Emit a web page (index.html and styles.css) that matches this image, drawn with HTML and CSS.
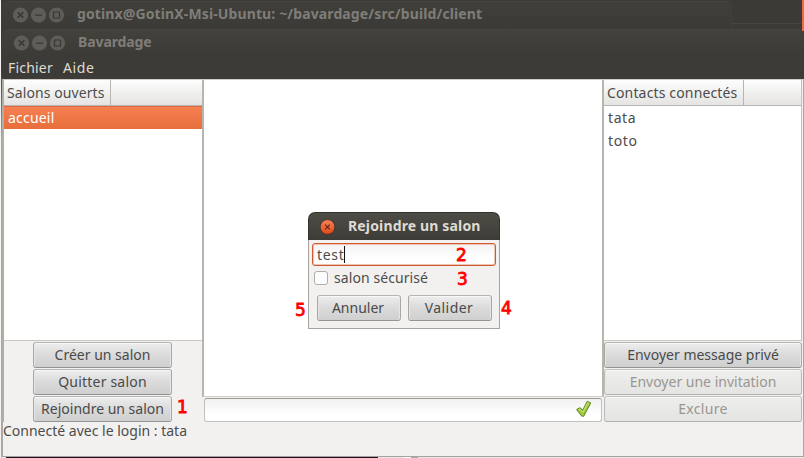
FILE: index.html
```
<!DOCTYPE html>
<html lang="fr">
<head>
<meta charset="utf-8">
<title>Bavardage</title>
<link rel="stylesheet" href="styles.css">
</head>
<body>
<svg class="defs" width="0" height="0">
  <symbol id="controls" viewBox="0 0 52 16">
    <g fill="#5f5d57"><circle cx="7.5" cy="8" r="7.6"/><circle cx="25.5" cy="8" r="7.6"/><circle cx="43.5" cy="8" r="7.6"/></g>
    <g fill="none" stroke="#383732" stroke-width="1.2">
      <path d="M4.7 5.2l5.6 5.6M10.3 5.2l-5.6 5.6" stroke-width="1.6"/>
      <path d="M22 8.2h7"/><path d="M40.5 5h6v6h-6z"/>
    </g>
  </symbol>
</svg>
<div class="terminal">
  <div class="terminal-bar">
    <svg class="controls" width="52" height="16"><use href="#controls"/></svg>
    <span class="terminal-title">gotinx@GotinX-Msi-Ubuntu: ~/bavardage/src/build/client</span>
  </div>
  <div class="terminal-side"></div>
  <div class="accent"></div>
</div>
<div class="window">
  <div class="titlebar">
    <svg class="controls" width="52" height="16"><use href="#controls"/></svg>
    <span class="title">Bavardage</span>
  </div>
  <nav class="menu"><span class="fichier">Fichier</span><span class="aide">Aide</span></nav>
  <main class="content">
    <section class="side">
      <div class="list">
        <div class="head"><span class="col salons">Salons ouverts</span><span class="rest"></span></div>
        <div class="row selected">accueil</div>
      </div>
      <div class="buttons narrow">
        <button class="btn">Créer un salon</button>
        <button class="btn quit">Quitter salon</button>
        <button class="btn">Rejoindre un salon<b class="mark m1">1</b></button>
      </div>
    </section>
    <section class="chat">
      <div class="log"></div>
      <div class="entry">
        <svg width="18" height="18" viewBox="0 0 18 18"><path d="M1.8 9.6l3.2-1.8 2.6 2.6L12.3 1.4l3.3 1.7L8.6 16.2 6.8 16z" fill="#a8cf3f" stroke="#628d2b" stroke-width="1.1" stroke-linejoin="round"/><path d="M3.3 9.7l1.5-.8 3 3 5-9.1 1.4.7" fill="none" stroke="#d5ec86" stroke-width=".9"/></svg>
      </div>
    </section>
    <section class="side right">
      <div class="list">
        <div class="head"><span class="col contacts">Contacts connectés</span><span class="rest"></span></div>
        <div class="row short">tata</div>
        <div class="row short">toto</div>
      </div>
      <div class="buttons">
        <button class="btn">Envoyer message privé</button>
        <button class="btn off" disabled>Envoyer une invitation</button>
        <button class="btn off excl" disabled>Exclure</button>
      </div>
    </section>
  </main>
  <footer class="status">Connecté avec le login : tata</footer>
</div>
<div class="desk"><span class="d1"></span><span class="d2"></span><span class="d3"></span></div>

<div class="dialog">
  <div class="dialog-bar">
    <svg width="16" height="16" viewBox="0 0 16 16"><defs><linearGradient id="r" x2="0" y2="1"><stop stop-color="#f78357"/><stop offset="1" stop-color="#dd4818"/></linearGradient></defs><circle cx="7.5" cy="8" r="7.4" fill="url(#r)" stroke="#33302b" stroke-width=".8"/><path d="M5.2 5.7l4.6 4.6M9.8 5.7l-4.6 4.6" stroke="#5a2413" stroke-width="1.1"/></svg>
    <span>Rejoindre un salon</span>
  </div>
  <div class="dialog-body">
    <div class="field"><span>test</span><i class="caret"></i><b class="mark m2">2</b></div>
    <div class="check"><i class="box"></i><span>salon sécurisé</span><b class="mark m3">3</b></div>
    <div class="actions"><button class="btn annuler">Annuler</button><button class="btn valider">Valider</button><b class="mark m4">4</b><b class="mark m5">5</b></div>
  </div>
</div>
</body>
</html>
```
FILE: styles.css
```
* { box-sizing: border-box; }
body {
  margin: 0;
  width: 804px;
  height: 458px;
  overflow: hidden;
  background:
    linear-gradient(#f4f3f2, #f4f3f2) 0 0 / 1px 100% no-repeat,
    linear-gradient(#3c3b37 70px, #a9a8a1 140px) #3c3b37;
  font: 14px/20px "Noto Sans", sans-serif;
  color: #4c4c4c;
}
.defs { position: absolute; }
.terminal { display: flex; height: 29px; margin-left: 1px; background: #3b3a36; }
.terminal-bar {
  display: flex;
  align-items: center;
  width: 731px;
  margin-top: 1px;
  padding: 0 0 2px 12px;
  border-radius: 7px 5px 0 0;
  border-top: 1px solid #464540;
  background: linear-gradient(#403f3a, #3b3a36);
  box-shadow: inset -1px 0 #403f3b;
}
.terminal-title, .title { font-weight: bold; color: #807d78; padding-bottom: 1px; }
.terminal-title { margin-left: 12px; letter-spacing: .12px; }
.terminal-side { flex: 1; height: 24px; border-bottom: 1px solid #464540; }
.accent { width: 2px; height: 31px; background: #ef6b45; z-index: 1; }
.window {
  display: flex;
  flex-direction: column;
  height: 428px;
  margin-left: 2px;
  position: relative;
}
.titlebar {
  display: flex;
  align-items: center;
  height: 26px;
  padding-left: 12px;
  border-top: 1px solid #474641;
  border-radius: 7px 5px 0 0;
  background: linear-gradient(#42413c, #3c3b37);
}
.title { margin-left: 12px; letter-spacing: -.1px; }
.menu { display: flex; height: 24px; padding: 3px 0 0 6px; color: #dfdbd2; background: #3c3b37; }
.fichier { width: 55px; letter-spacing: .2px; }
.aide { letter-spacing: .6px; }
.content {
  display: grid;
  grid-template-columns: 199px 401px 198px;
  height: 343px;
  border-top: 1px solid #cfccc6;
  border-left: 2px solid #b0aea6;
  border-right: 1px solid #aaa8a0;
  background: #f2f1f0;
}
.side { display: flex; flex-direction: column; }
.list { height: 261px; background: #fff; border-bottom: 1px solid #cac7c3; }
.right .list { border-right: 1px solid #c4c1bc; }
.head {
  display: flex;
  height: 26px;
  line-height: 26px;
  border-bottom: 1px solid #b8b5b0;
  background: linear-gradient(#fdfdfd, #e5e4e2);
}
.col { padding-left: 3px; border-right: 1px solid #b8b5b0; white-space: nowrap; }
.salons { width: 107px; letter-spacing: .08px; }
.contacts { width: 140px; letter-spacing: .15px; }
.row { height: 23px; line-height: 23px; padding-left: 4px; letter-spacing: .2px; }
.short { letter-spacing: .6px; }
.selected { color: #fff; background: linear-gradient(#f58053, #e86f3b); box-shadow: inset 0 1px #dd6a3d; }
.buttons { display: grid; gap: 1px; padding-top: 1px; }
.narrow { padding-left: 29px; width: 168px; }
.btn {
  height: 26px;
  padding: 0;
  border: 1px solid #a5a3a1;
  border-color: #b7b5b2 #a9a7a4 #969492;
  border-radius: 3px;
  background: linear-gradient(#eeeeee, #dcdcdc 45%, #cfcfcf);
  box-shadow: inset 0 1px #f8f8f8, inset 1px 0 #e6e6e6, inset -1px 0 #e6e6e6;
  font: inherit;
  line-height: 22px;
  color: #4a4a4a;
  white-space: nowrap;
  position: relative;
}
.quit { letter-spacing: .2px; }
.off { color: #9a9691; border-color: #c4c2bf #bdbbb8 #b4b2b0; background: linear-gradient(#eeeeed, #e4e4e3); }
.excl { letter-spacing: .35px; }
.chat { display: flex; flex-direction: column; }
.log {
  height: 317px;
  margin-left: -1px;
  background: #fff;
  border: solid #b8b4ae;
  border-width: 0 2px 1px;
  border-bottom-color: #d0cdc9;
}
.entry {
  display: flex;
  justify-content: flex-end;
  align-items: center;
  height: 24px;
  margin: 1px 2px 0 1px;
  padding-right: 8px;
  border: 1px solid #c2c0bd;
  border-top-color: #a09c98;
  border-radius: 3px;
  background: linear-gradient(#f1f1f1, #fff 70%);
}
.entry svg { margin-top: -2px; }
.status {
  flex: 1;
  line-height: 17px;
  border: solid #aaa8a0;
  border-width: 0 1px 1px;
  border-bottom-color: #a6a39f;
  background: #f2f1f0;
}
.desk { display: flex; height: 1px; background: #e8e8e7; }
.d1 { width: 372px; margin-left: 6px; background: #240a1e; }
.d2 { width: 7px; margin-left: 26px; background: #fff; }
.d3 { width: 7px; background: #aaa; }

.dialog { position: absolute; left: 308px; top: 212px; width: 192px; height: 117px; }
.dialog-bar {
  display: flex;
  align-items: center;
  height: 28px;
  padding-left: 11px;
  border: 1px solid #34332f;
  border-bottom: 0;
  border-radius: 7px 7px 0 0;
  background: linear-gradient(#4d4c45, #3d3c38);
  color: #dfdbd2;
  font-weight: bold;
}
.dialog-bar span { margin-left: 12px; padding-bottom: 1px; letter-spacing: .15px; }
.dialog-body {
  height: 89px;
  padding: 3px 3px 0;
  border: 1px solid #a6a49e;
  border-top: 0;
  background: #f2f1f0;
}
.field {
  position: relative;
  display: flex;
  align-items: center;
  height: 23px;
  width: 184px;
  padding-left: 4px;
  border: 1px solid #d2582f;
  box-shadow: inset 0 0 0 1px #f0c4b4;
  border-radius: 3px;
  background: linear-gradient(#f3f3f3, #fff 70%);
  letter-spacing: .7px;
}
.caret { width: 1px; height: 17px; background: #111; margin-left: -1px; }
.check { position: relative; display: flex; align-items: center; height: 24px; padding-left: 2px; letter-spacing: .08px; }
.box { width: 14px; height: 14px; margin-right: 6px; border: 1px solid #b0aeab; border-radius: 3px; background: #fdfdfd; }
.actions { position: relative; display: flex; gap: 7px; padding: 5px 0 0 5px; }
.actions .btn { width: 84px; padding-right: 2px; }
.valider { letter-spacing: .45px; }
.mark { position: absolute; font: 17px/20px "DejaVu Sans", sans-serif; color: #f00; -webkit-text-stroke: .8px #f00; letter-spacing: 0; }
.m1 { left: 143px; top: 0; }
.m2 { left: 143px; top: 1px; }
.m3 { left: 145px; top: 3px; }
.m4 { left: 189px; top: 8px; }
.m5 { left: -17px; top: 10px; }
```
